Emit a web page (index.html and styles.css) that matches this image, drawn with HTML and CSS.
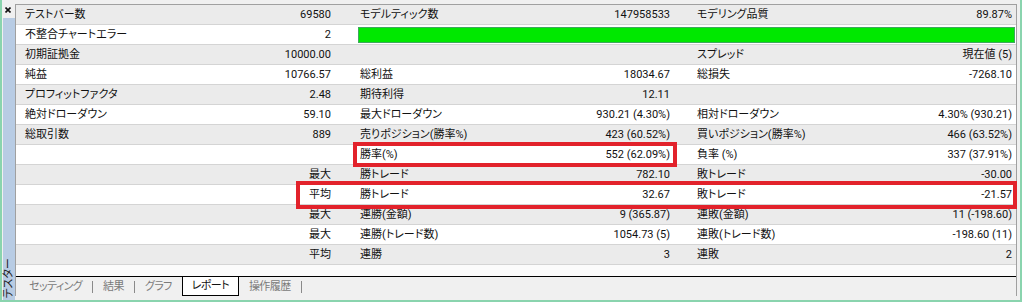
FILE: index.html
```html
<!DOCTYPE html>
<html lang="ja">
<head>
  <meta charset="UTF-8">
  <title>テスター</title>
  <link rel="stylesheet" href="styles.css">
</head>
<body>
  <div class="frame">
    <div class="side">
      <div class="close">
        <svg width="6" height="6" viewBox="0 0 6 6"><path d="M0.5 0.5 L5.5 5.5 M5.5 0.5 L0.5 5.5" stroke="#111" stroke-width="1.6"/></svg>
      </div>
      <div class="strip"><span class="title">テスター</span></div>
    </div>
    <div class="main">
      <div class="panel">
        <div class="report">
          <div class="row">
            <div class="cell"><span>テストバー数</span><span>69580</span></div>
            <div class="cell"><span>モデルティック数</span><span>147958533</span></div>
            <div class="cell"><span>モデリング品質</span><span>89.87%</span></div>
          </div>
          <div class="row">
            <div class="cell"><span>不整合チャートエラー</span><span>2</span></div>
            <div class="bar"></div>
          </div>
          <div class="row">
            <div class="cell"><span>初期証拠金</span><span>10000.00</span></div>
            <div class="cell"></div>
            <div class="cell"><span>スプレッド</span><span>現在値 (5)</span></div>
          </div>
          <div class="row">
            <div class="cell"><span>純益</span><span>10766.57</span></div>
            <div class="cell"><span>総利益</span><span>18034.67</span></div>
            <div class="cell"><span>総損失</span><span>-7268.10</span></div>
          </div>
          <div class="row">
            <div class="cell"><span>プロフィットファクタ</span><span>2.48</span></div>
            <div class="cell"><span>期待利得</span><span>12.11</span></div>
            <div class="cell"></div>
          </div>
          <div class="row">
            <div class="cell"><span>絶対ドローダウン</span><span>59.10</span></div>
            <div class="cell"><span>最大ドローダウン</span><span>930.21 (4.30%)</span></div>
            <div class="cell"><span>相対ドローダウン</span><span>4.30% (930.21)</span></div>
          </div>
          <div class="row">
            <div class="cell"><span>総取引数</span><span>889</span></div>
            <div class="cell"><span>売りポジション(勝率%)</span><span>423 (60.52%)</span></div>
            <div class="cell"><span>買いポジション(勝率%)</span><span>466 (63.52%)</span></div>
          </div>
          <div class="row">
            <div class="cell"></div>
            <div class="cell"><span>勝率(%)</span><span>552 (62.09%)</span></div>
            <div class="cell"><span>負率 (%)</span><span>337 (37.91%)</span></div>
          </div>
          <div class="row">
            <div class="cell"><span></span><span>最大</span></div>
            <div class="cell"><span>勝トレード</span><span>782.10</span></div>
            <div class="cell"><span>敗トレード</span><span>-30.00</span></div>
          </div>
          <div class="row">
            <div class="cell"><span></span><span>平均</span></div>
            <div class="cell"><span>勝トレード</span><span>32.67</span></div>
            <div class="cell"><span>敗トレード</span><span>-21.57</span></div>
          </div>
          <div class="row">
            <div class="cell"><span></span><span>最大</span></div>
            <div class="cell"><span>連勝(金額)</span><span>9 (365.87)</span></div>
            <div class="cell"><span>連敗(金額)</span><span>11 (-198.60)</span></div>
          </div>
          <div class="row">
            <div class="cell"><span></span><span>最大</span></div>
            <div class="cell"><span>連勝(トレード数)</span><span>1054.73 (5)</span></div>
            <div class="cell"><span>連敗(トレード数)</span><span>-198.60 (11)</span></div>
          </div>
          <div class="row">
            <div class="cell"><span></span><span>平均</span></div>
            <div class="cell"><span>連勝</span><span>3</span></div>
            <div class="cell"><span>連敗</span><span>2</span></div>
          </div>
          <div class="filler"></div>
        </div>

        <div class="tabs">
          <span class="tab">セッティング</span>
          <i class="sep"></i>
          <span class="tab">結果</span>
          <i class="sep"></i>
          <span class="tab">グラフ</span>
          <span class="tab on">レポート</span>
          <span class="tab">操作履歴</span>
          <i class="sep"></i>
        </div>

        <!-- red markers drawn over the report -->
        <div class="mark mark-rate"></div>
        <div class="mark mark-avg"></div>
      </div>
    </div>
  </div>
</body>
</html>
```

FILE: styles.css
```css
*{
  margin: 0;
  padding: 0;
  box-sizing: border-box;
}
body{
  background: #f0f0f0;
  font-family: Roboto, "Noto Sans CJK JP", sans-serif;
  font-size: 11px;
  color: #111;
  font-feature-settings: "palt";
}
.frame{
  width: 1022px;
  height: 302px;
  display: flex;
  border: 2px solid #8ad4ae;
  border-top: none;
}
.side{
  width: 13px;
  display: flex;
  flex-direction: column;
}
.close{
  height: 18px;
  padding: 7px 0 0 3px;
}
.close svg{
  display: block;
}
.strip{
  flex: 1;
  margin-left: 1px;
  background: #b8cce4;
  display: flex;
  align-items: flex-end;
  justify-content: center;
  padding-bottom: 2px;
}
.title{
  writing-mode: vertical-rl;
  text-orientation: sideways;
  transform: rotate(180deg);
  font-size: 11px;
  line-height: 12px;
  color: #222;
}
.main{
  flex: 1;
  padding: 4px 3px 4px 0;
}
.panel{
  position: relative;
  height: 100%;
  border: 1px solid #a0a0a0;
  border-bottom: none;
  background: #fff;
}
.row{
  display: grid;
  grid-template-columns: 324px 339px 1fr;
  height: 20px;
  border-bottom: 1px solid #d4d4d4;
  background: #ebebeb;
}
.row:nth-child(even){
  background: #fff;
}
.cell{
  display: flex;
  justify-content: space-between;
  align-items: center;
  line-height: 19px;
  white-space: nowrap;
}
.cell:nth-child(1){
  padding: 0 9px;
}
.cell:nth-child(2){
  padding: 0 9px 0 20px;
}
.cell:nth-child(3){
  padding: 0 4px 0 18px;
}
.bar{
  grid-column: 2 / 4;
  align-self: center;
  height: 16px;
  margin: 0 1px 0 18px;
  background: #00e800;
  border: 1px solid #3ea85e;
}
.filler{
  height: 11px;
  background: #fbfbfb;
}
.tabs{
  display: flex;
  align-items: flex-start;
  height: 20px;
  padding-left: 3px;
  border-top: 1px solid #000;
  background: #f0f0f0;
  color: #7b7b7b;
}
.tab{
  padding: 0 10px;
  line-height: 19px;
  letter-spacing: -0.6px;
}
.tab.on{
  height: 19px;
  padding: 0 9px;
  background: #fff;
  border: 1px solid #000;
  border-top: none;
  color: #111;
  line-height: 18px;
}
.sep{
  width: 1px;
  height: 12px;
  margin-top: 4px;
  background: #8a8a8a;
}
.mark{
  position: absolute;
  border: 4px solid #e2222b;
}
.mark-rate{
  left: 337px;
  top: 137px;
  width: 324px;
  height: 25px;
}
.mark-avg{
  left: 280px;
  top: 176px;
  width: 721px;
  height: 28px;
}
```
